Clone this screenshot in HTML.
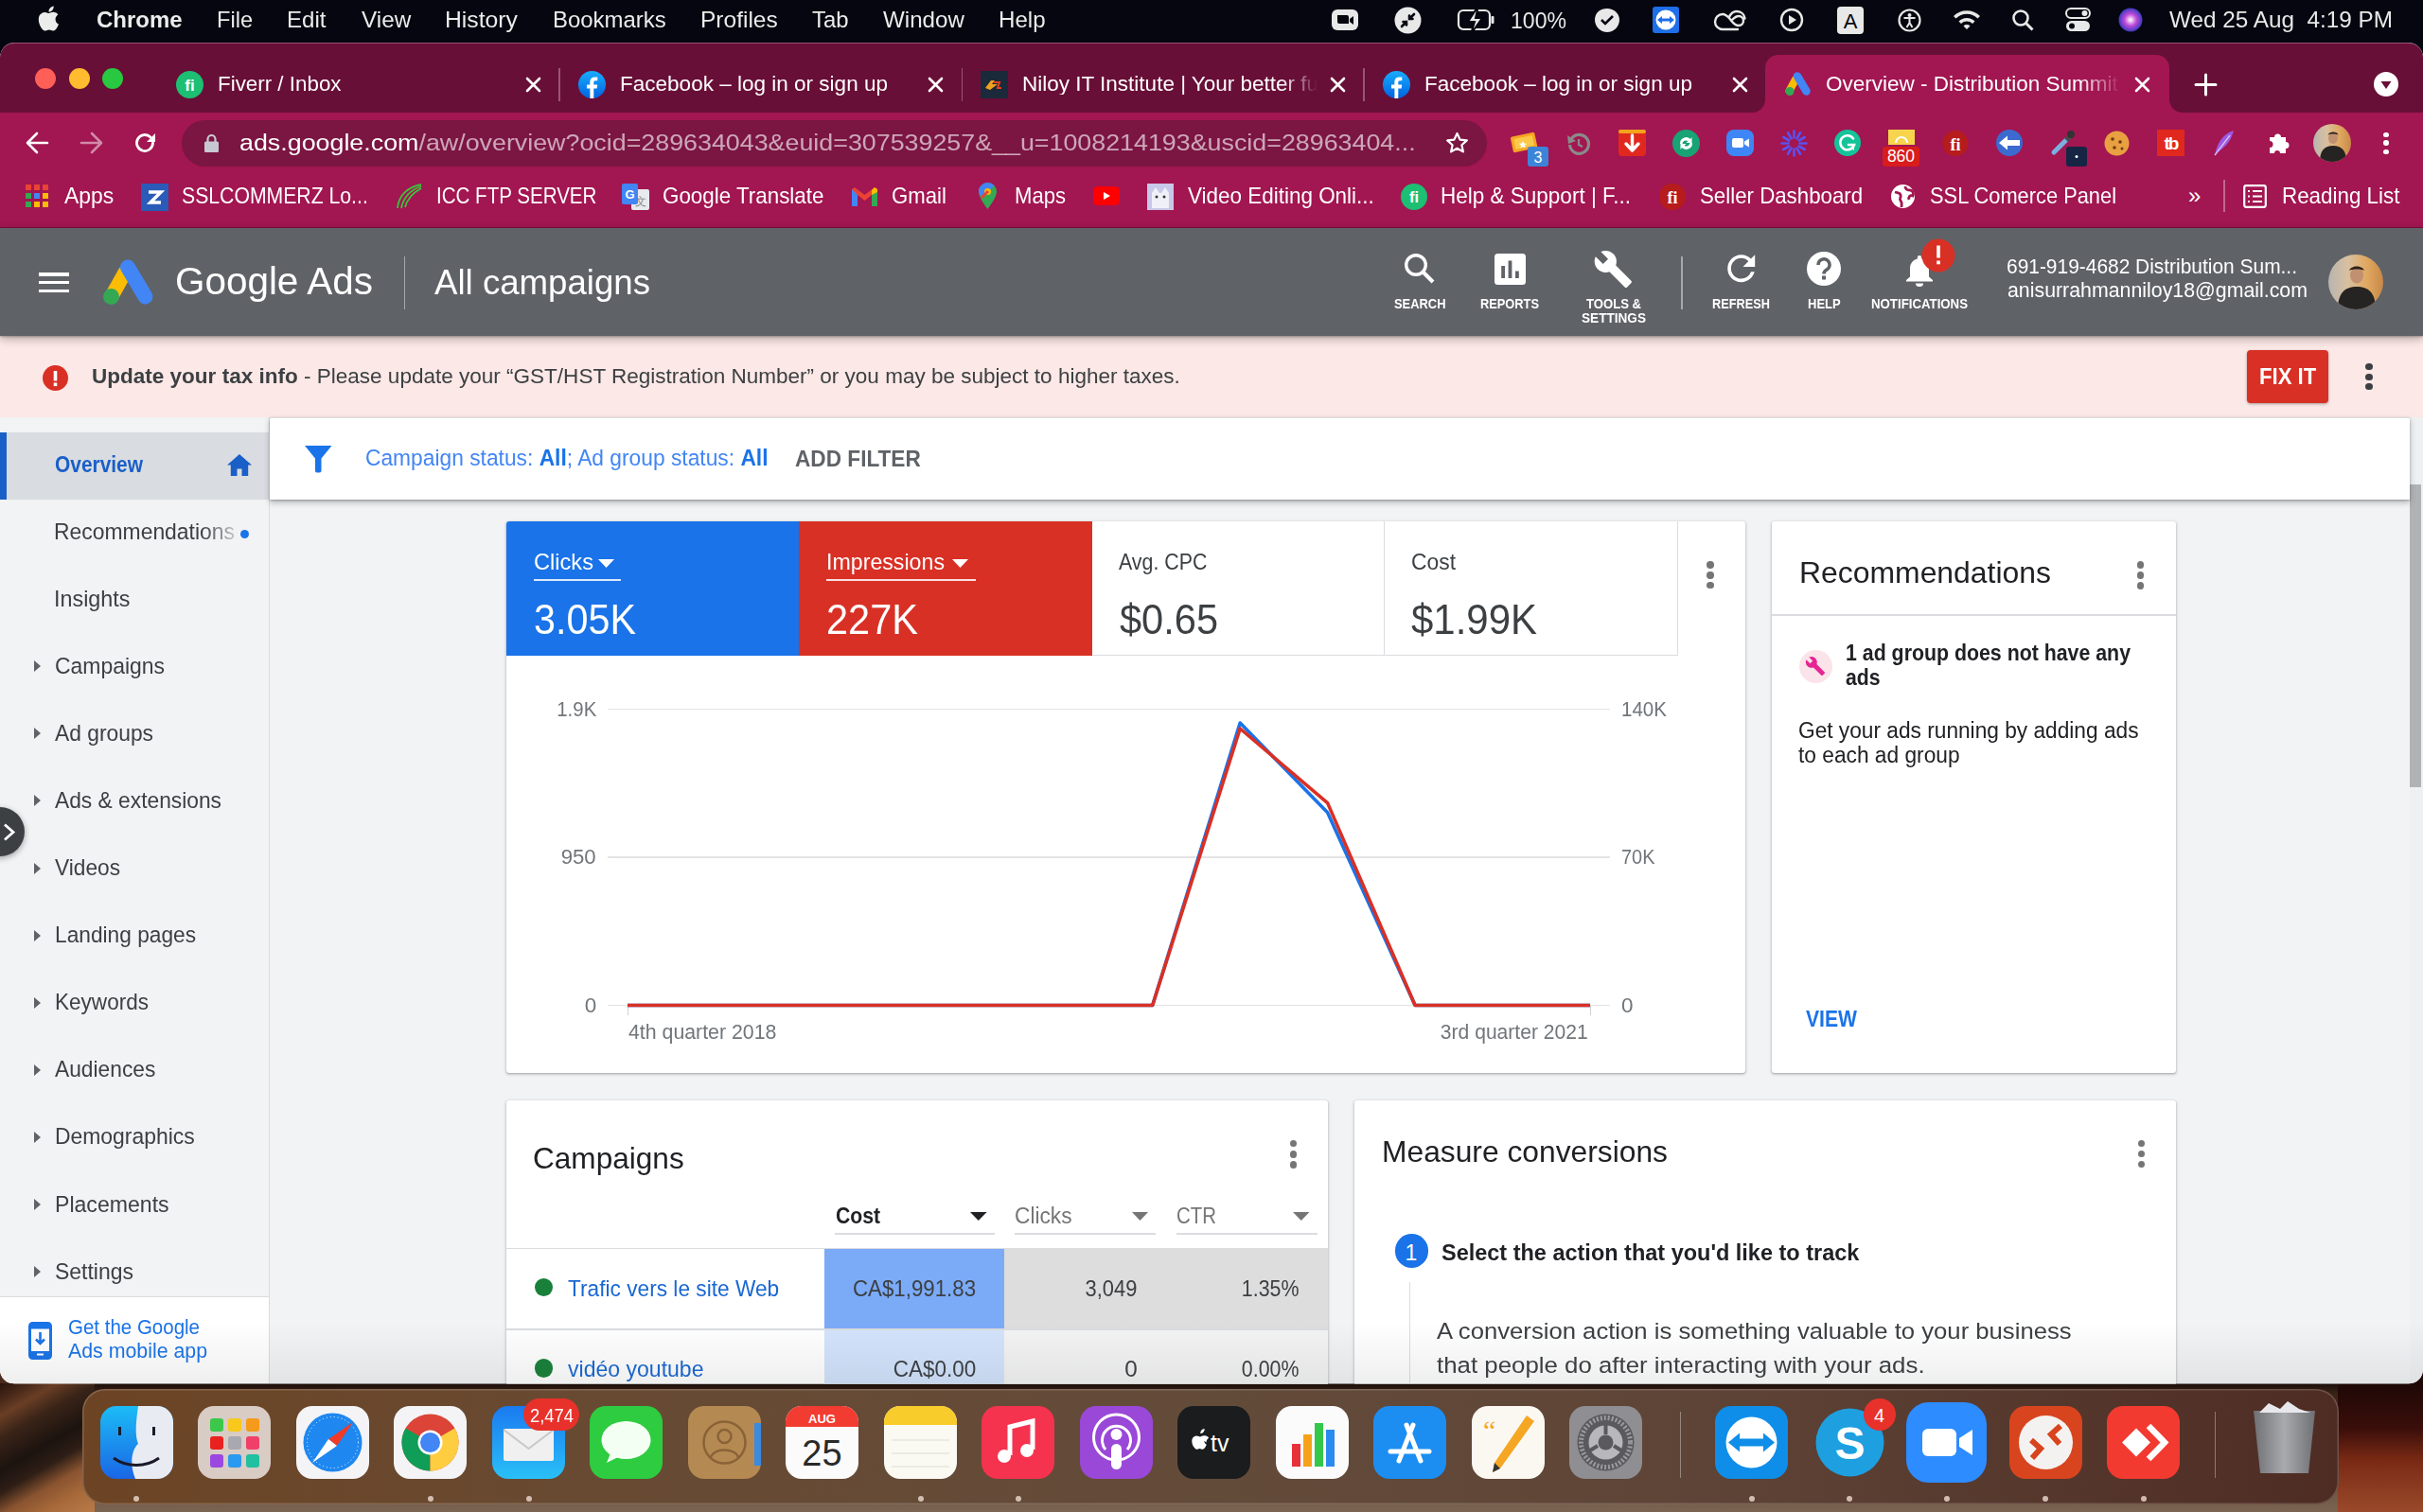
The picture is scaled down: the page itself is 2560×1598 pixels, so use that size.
<!DOCTYPE html><html><head><meta charset="utf-8"><title>Google Ads</title><style>*{margin:0;padding:0;box-sizing:content-box}
html,body{width:2560px;height:1598px;overflow:hidden;background:#3a2418;font-family:"Liberation Sans",sans-serif}
.a{position:absolute}
.t{position:absolute;line-height:1;white-space:nowrap}
svg.a{overflow:visible}
</style></head><body>
<div class="a" style="left:0;top:0;width:2560px;height:1598px;background:linear-gradient(180deg,#05060f 0,#05060f 120px,rgba(0,0,0,0) 121px),linear-gradient(90deg,#4a2a1c 0%,#7a4a2a 8%,#5e3a26 20%,#6a4630 45%,#5a3a2a 70%,#3a1a14 88%,#1e0806 100%);"></div>
<div class="a" style="left:0;top:1462px;width:2560px;height:136px;background:linear-gradient(180deg,#1a0c08 0%,#3a2418 8%,#5a3a28 50%,#7a6452 100%);"></div>
<div class="a" style="left:2470px;top:1462px;width:90px;height:136px;background:linear-gradient(180deg,#1e0806 0%,#3a0e0a 35%,#7a2a14 60%,#9a4a2a 100%);"></div>
<div class="a" style="left:0;top:1462px;width:100px;height:136px;background:linear-gradient(150deg,#2a140c 0%,#4a2a1a 10%,#6a3e24 18%,#3a2418 30%,#1c130f 48%,#2e1e16 60%,#8a5430 72%,#a86a3a 85%,#b87a48 100%);"></div>
<div class="a" style="left:0px;top:0px;width:2560px;height:46px;background:#05060f;"></div>
<svg class="a" style="left:39px;top:5px;" width="24" height="29" viewBox="0 0 24 29"><path fill="#ececec" d="M19.6 15.4c0-3.3 2.7-4.9 2.8-5-1.5-2.2-3.9-2.5-4.8-2.6-2-.2-4 1.2-5 1.2s-2.6-1.2-4.3-1.1C6 7.9 4 9.2 2.9 11.1.6 15.1 2.3 21 4.5 24.2c1.100 1.600 2.400 3.300 4.100 3.300 1.600-.1 2.300-1.100 4.300-1.100s2.600 1.100 4.300 1c1.800 0 2.900-1.600 4-3.200 1.200-1.800 1.700-3.600 1.800-3.700-.1 0-3.400-1.300-3.400-5.100zM16.400 5.700c.9-1.100 1.500-2.600 1.300-4.100-1.300.1-2.900.9-3.800 2-.8.9-1.600 2.500-1.400 4 1.500.1 3-.8 3.900-1.900z"/></svg>
<div class="t" style="top:9.3px;font-size:24.5px;color:#ececec;font-weight:700;left:101.7px;transform:scaleX(0.9776);transform-origin:0 0;">Chrome</div>
<div class="t" style="top:9.3px;font-size:24.5px;color:#ececec;left:228.5px;transform:scaleX(0.9626);transform-origin:0 0;">File</div>
<div class="t" style="top:9.3px;font-size:24.5px;color:#ececec;left:303px;transform:scaleX(0.9830);transform-origin:0 0;">Edit</div>
<div class="t" style="top:9.3px;font-size:24.5px;color:#ececec;left:381.7px;transform:scaleX(0.9912);transform-origin:0 0;">View</div>
<div class="t" style="top:9.3px;font-size:24.5px;color:#ececec;left:470px;transform:scaleX(1.0088);transform-origin:0 0;">History</div>
<div class="t" style="top:9.3px;font-size:24.5px;color:#ececec;left:583.7px;transform:scaleX(0.9777);transform-origin:0 0;">Bookmarks</div>
<div class="t" style="top:9.3px;font-size:24.5px;color:#ececec;left:739.8px;transform:scaleX(1.0001);transform-origin:0 0;">Profiles</div>
<div class="t" style="top:9.3px;font-size:24.5px;color:#ececec;left:858px;transform:scaleX(0.9746);transform-origin:0 0;">Tab</div>
<div class="t" style="top:9.3px;font-size:24.5px;color:#ececec;left:932.6px;transform:scaleX(0.9858);transform-origin:0 0;">Window</div>
<div class="t" style="top:9.3px;font-size:24.5px;color:#ececec;left:1054.7px;transform:scaleX(0.9844);transform-origin:0 0;">Help</div>
<svg class="a" style="left:1407px;top:8px;" width="28" height="26" viewBox="0 0 28 26"><rect x="0" y="2" width="28" height="22" rx="6" fill="#e8e8e8"/><path d="M6 8h10a2 2 0 0 1 2 2v7H8a2 2 0 0 1-2-2z" fill="#05060f"/><path d="M19 12l4-3v9l-4-3z" fill="#05060f"/></svg>
<svg class="a" style="left:1473px;top:7px;" width="29" height="29" viewBox="0 0 29 29"><circle cx="14.5" cy="14.5" r="14" fill="#e8e8e8"/><path d="M8 21l5-5M9.500 16H13v3.500M21 8l-5 5M19.500 13H16V9.500" stroke="#05060f" stroke-width="2.600" fill="none" stroke-linecap="round"/></svg>
<svg class="a" style="left:1540px;top:5px;" width="40" height="32" viewBox="0 0 40 32"><rect x="1" y="6" width="33" height="20" rx="5" fill="none" stroke="#e8e8e8" stroke-width="2.200"/><rect x="35.500" y="12" width="3" height="8" rx="1" fill="#e8e8e8"/><path d="M22 1L11 18h7l-4 13 12-17h-7z" fill="#e8e8e8" stroke="#05060f" stroke-width="2"/></svg>
<div class="t" style="top:9.7px;font-size:24px;color:#e8e8e8;left:1596px;transform:scaleX(0.9612);transform-origin:0 0;">100%</div>
<svg class="a" style="left:1684px;top:8px;" width="28" height="27" viewBox="0 0 28 27"><path d="M14 1c7 0 13 5 13 12 0 7-6 13-13 13S1 20 1 13C1 5 7 1 14 1z" fill="#e8e8e8"/><path d="M8 13l4 4 8-8" stroke="#05060f" stroke-width="2.6" fill="none"/></svg>
<svg class="a" style="left:1746px;top:7px;" width="28" height="28" viewBox="0 0 28 28"><rect width="28" height="28" rx="3" fill="#1e6ee8"/><circle cx="14" cy="14" r="10.5" fill="#fff"/><path d="M5 14l5-4v2.5h8V10l5 4-5 4v-2.5h-8V18z" fill="#1e6ee8"/></svg>
<svg class="a" style="left:1810px;top:8px;" width="35" height="26" viewBox="0 0 35 26"><path d="M10 23a8 8 0 0 1 0-16c4 0 6 3 8.500 6s4.500 6 8.500 6a5 5 0 0 0 0-10c-3 0-5 2-7 4M17 10c1.500-3.500 4-6 8-6 5 0 8 3.500 8.500 7.500M10 23h16" stroke="#e8e8e8" stroke-width="2.400" fill="none" stroke-linecap="round"/></svg>
<svg class="a" style="left:1880px;top:8px;" width="26" height="26" viewBox="0 0 26 26"><circle cx="13" cy="13" r="11" fill="none" stroke="#e8e8e8" stroke-width="2.4"/><path d="M10 8l8 5-8 5z" fill="#e8e8e8"/></svg>
<svg class="a" style="left:1941px;top:7px;" width="28" height="29" viewBox="0 0 28 29"><rect x="0" y="0" width="28" height="29" rx="4" fill="#e8e8e8"/><text x="14" y="23" text-anchor="middle" font-family="Liberation Sans" font-size="22" fill="#05060f">A</text></svg>
<svg class="a" style="left:2005px;top:9px;" width="25" height="25" viewBox="0 0 25 25"><circle cx="12.5" cy="12.5" r="11" fill="none" stroke="#e8e8e8" stroke-width="2.2"/><circle cx="12.5" cy="7" r="2" fill="#e8e8e8"/><path d="M6.5 10h12M12.5 10v5l-3 5M12.5 15l3 5" stroke="#e8e8e8" stroke-width="2" fill="none"/></svg>
<svg class="a" style="left:2062px;top:8px;" width="32" height="24" viewBox="0 0 32 24"><path d="M2 9a20 20 0 0 1 28 0l-2.5 2.5a16.5 16.5 0 0 0-23 0z" fill="#e8e8e8"/><path d="M7.5 14.5a12 12 0 0 1 17 0L22 17a8.5 8.5 0 0 0-12 0z" fill="#e8e8e8"/><path d="M12.5 19.5a5 5 0 0 1 7 0L16 23z" fill="#e8e8e8"/></svg>
<svg class="a" style="left:2125px;top:9px;" width="25" height="25" viewBox="0 0 25 25"><circle cx="10" cy="10" r="7.5" fill="none" stroke="#e8e8e8" stroke-width="2.6"/><path d="M15.5 15.5l7 7" stroke="#e8e8e8" stroke-width="3"/></svg>
<svg class="a" style="left:2182px;top:8px;" width="27" height="26" viewBox="0 0 27 26"><rect x="1" y="1" width="25" height="10" rx="5" fill="none" stroke="#e8e8e8" stroke-width="2"/><circle cx="20.5" cy="6" r="3" fill="#e8e8e8"/><rect x="1" y="14" width="25" height="11" rx="5.5" fill="#e8e8e8"/><circle cx="7" cy="19.5" r="3" fill="#05060f"/></svg>
<svg class="a" style="left:2238px;top:8px;" width="26" height="26" viewBox="0 0 26 26"><defs><radialGradient id="sg" cx="50%" cy="50%" r="50%"><stop offset="0" stop-color="#fff"/><stop offset=".5" stop-color="#c04ad8"/><stop offset="1" stop-color="#3a3ac0"/></radialGradient></defs><circle cx="13" cy="13" r="12.5" fill="url(#sg)"/></svg>
<div class="t" style="top:9.3px;font-size:24.5px;color:#e8e8e8;left:2291.6px;transform:scaleX(0.9920);transform-origin:0 0;">Wed 25 Aug&nbsp;&nbsp;4:19 PM</div>
<div class="a" style="left:0;top:0;width:2560px;height:1598px;clip-path:inset(45px 0 135.5px 0 round 15px);">
<div class="a" style="left:0;top:45px;width:2560px;height:1418px;border-radius:15px;background:#f1f3f4;overflow:hidden;"></div>
<div class="a" style="left:0;top:45px;width:2560px;height:74px;border-radius:15px 15px 0 0;background:#680f37;box-shadow:inset 0 1px 0 rgba(255,255,255,.28);"></div>
<div class="a" style="left:37px;top:71.5px;width:22px;height:22px;border-radius:50%;background:#fe5f57;"></div>
<div class="a" style="left:72.5px;top:71.5px;width:22px;height:22px;border-radius:50%;background:#febc2e;"></div>
<div class="a" style="left:108px;top:71.5px;width:22px;height:22px;border-radius:50%;background:#28c840;"></div>
<svg class="a" style="left:186px;top:74.5px;" width="29" height="29" viewBox="0 0 29 29"><circle cx="14.5" cy="14.5" r="14.5" fill="#1dbf73"/><text x="14.5" y="21" text-anchor="middle" font-family="Liberation Sans" font-weight="700" font-size="17" fill="#fff">fi</text></svg>
<div class="t" style="top:77.5px;font-size:22.5px;color:#fff;left:229.7px;transform:scaleX(0.9940);transform-origin:0 0;">Fiverr / Inbox</div>
<svg class="a" style="left:556.0px;top:81.5px;" width="15" height="15" viewBox="0 0 15 15"><path d="M1 1L14 14M14 1L1 14" stroke="#fff" stroke-width="2.6" stroke-linecap="round"/></svg>
<div class="a" style="left:590px;top:72px;width:1.5px;height:35px;background:rgba(255,255,255,.3);"></div>
<svg class="a" style="left:611px;top:74.5px;" width="29" height="29" viewBox="0 0 29 29"><defs><linearGradient id="fbg" x1="0" y1="0" x2="0" y2="1"><stop offset="0" stop-color="#18acfe"/><stop offset="1" stop-color="#0163e0"/></linearGradient></defs><circle cx="14.5" cy="14.5" r="14.5" fill="url(#fbg)"/><path d="M16.3 29V18.6h3.4l.5-4h-3.9v-2.5c0-1.1.3-1.900 1.900-1.900h2.100V6.600c-.4 0-1.600-.2-3-.2-3 0-5 1.800-5 5.200v3H9v4h3.400V29z" fill="#fff"/></svg>
<div class="t" style="top:77.5px;font-size:22.5px;color:#fff;left:654.7px;transform:scaleX(1.0011);transform-origin:0 0;">Facebook – log in or sign up</div>
<svg class="a" style="left:980.5px;top:81.5px;" width="15" height="15" viewBox="0 0 15 15"><path d="M1 1L14 14M14 1L1 14" stroke="#fff" stroke-width="2.6" stroke-linecap="round"/></svg>
<div class="a" style="left:1015.5px;top:72px;width:1.5px;height:35px;background:rgba(255,255,255,.3);"></div>
<svg class="a" style="left:1036px;top:75px;" width="29" height="29" viewBox="0 0 29 29"><rect width="29" height="29" fill="#1a2a3a"/><path d="M5 18l6-8h4l-3 4h6l-8 6z" fill="#f0a020"/><path d="M14 12h6l-2 6h4" stroke="#e04020" stroke-width="2" fill="none"/></svg>
<div class="t" style="left:1080px;top:77.5px;font-size:22.5px;color:#fff;width:312px;overflow:hidden;-webkit-mask-image:linear-gradient(90deg,#000 88%,transparent 100%);">Niloy IT Institute | Your better future</div>
<svg class="a" style="left:1405.5px;top:81.5px;" width="15" height="15" viewBox="0 0 15 15"><path d="M1 1L14 14M14 1L1 14" stroke="#fff" stroke-width="2.6" stroke-linecap="round"/></svg>
<div class="a" style="left:1440px;top:72px;width:1.5px;height:35px;background:rgba(255,255,255,.3);"></div>
<svg class="a" style="left:1461px;top:74.5px;" width="29" height="29" viewBox="0 0 29 29"><defs><linearGradient id="fbg" x1="0" y1="0" x2="0" y2="1"><stop offset="0" stop-color="#18acfe"/><stop offset="1" stop-color="#0163e0"/></linearGradient></defs><circle cx="14.5" cy="14.5" r="14.5" fill="url(#fbg)"/><path d="M16.3 29V18.6h3.4l.5-4h-3.9v-2.5c0-1.1.3-1.900 1.900-1.900h2.100V6.600c-.4 0-1.600-.2-3-.2-3 0-5 1.800-5 5.200v3H9v4h3.400V29z" fill="#fff"/></svg>
<div class="t" style="top:77.5px;font-size:22.5px;color:#fff;left:1505px;transform:scaleX(1.0011);transform-origin:0 0;">Facebook – log in or sign up</div>
<svg class="a" style="left:1830.5px;top:81.5px;" width="15" height="15" viewBox="0 0 15 15"><path d="M1 1L14 14M14 1L1 14" stroke="#fff" stroke-width="2.6" stroke-linecap="round"/></svg>
<div class="a" style="left:1865px;top:58px;width:427px;height:62px;background:#a21651;border-radius:14px 14px 0 0;"></div>
<svg class="a" style="left:1851px;top:105px" width="14" height="14"><path d="M0 14 A14 14 0 0 0 14 0 V14z" fill="#a21651"/></svg>
<svg class="a" style="left:2292px;top:105px" width="14" height="14"><path d="M14 14 A14 14 0 0 1 0 0 V14z" fill="#a21651"/></svg>
<svg class="a" style="left:1886px;top:76px;" width="28" height="26" viewBox="0 0 28 26"><path d="M4.5 20 L11 8" stroke="#fbbc04" stroke-width="8" stroke-linecap="round"/><path d="M13 4.5 L22.5 20.5" stroke="#4285f4" stroke-width="8.5" stroke-linecap="round"/><circle cx="5" cy="20.5" r="4.5" fill="#34a853"/></svg>
<div class="t" style="left:1929px;top:77.5px;font-size:22.5px;color:#fff;width:312px;overflow:hidden;-webkit-mask-image:linear-gradient(90deg,#000 86%,transparent 100%);">Overview - Distribution Summit</div>
<svg class="a" style="left:2255.5px;top:81.5px;" width="15" height="15" viewBox="0 0 15 15"><path d="M1 1L14 14M14 1L1 14" stroke="#fff" stroke-width="2.6" stroke-linecap="round"/></svg>
<svg class="a" style="left:2319px;top:78px;" width="23" height="23" viewBox="0 0 23 23"><path d="M11.5 1v21M1 11.5h21" stroke="#fff" stroke-width="3" stroke-linecap="round"/></svg>
<svg class="a" style="left:2507.5px;top:76px;" width="26" height="26" viewBox="0 0 26 26"><circle cx="13" cy="13" r="13" fill="#fff"/><path d="M7.5 10h11l-5.5 8z" fill="#680f37"/></svg>
<div class="a" style="left:0px;top:119px;width:2560px;height:122px;background:#a21651;"></div>
<svg class="a" style="left:27px;top:139px;" width="25" height="24" viewBox="0 0 25 24"><path d="M23 12H3M12 2L2 12l10 10" stroke="#fff" stroke-width="2.6" fill="none" stroke-linecap="round" stroke-linejoin="round"/></svg>
<svg class="a" style="left:84px;top:139px;" width="25" height="24" viewBox="0 0 25 24"><path d="M2 12h20M13 2l10 10-10 10" stroke="rgba(255,255,255,.5)" stroke-width="2.6" fill="none" stroke-linecap="round" stroke-linejoin="round"/></svg>
<svg class="a" style="left:140px;top:138px;" width="26" height="26" viewBox="0 0 26 26"><path d="M21.5 13a8.5 8.5 0 1 1-2.5-6" stroke="#fff" stroke-width="2.8" fill="none" stroke-linecap="round"/><path d="M24 3v9h-9z" fill="#fff"/></svg>
<div class="a" style="left:192px;top:126.5px;width:1379px;height:49px;border-radius:25px;background:#7b1542;"></div>
<svg class="a" style="left:216px;top:141px;" width="15" height="20" viewBox="0 0 15 20"><path d="M3.5 9V6a4 4 0 0 1 8 0v3" stroke="#c8c8d0" stroke-width="2.2" fill="none"/><rect x="0" y="8.5" width="15" height="11.5" rx="1.5" fill="#c8c8d0"/></svg>
<div class="t" style="top:138.9px;font-size:24.6px;color:#fff;left:253px;transform:scaleX(1.0909);transform-origin:0 0;">ads.google.com<span style="color:rgba(255,255,255,.62)">/aw/overview?ocid=289634043&amp;euid=307539257&amp;__u=1008214193&amp;uscid=28963404...</span></div>
<svg class="a" style="left:1527px;top:139px;" width="25" height="25" viewBox="0 0 25 25"><path d="M12.5 2l3.1 6.6 7.2.8-5.4 4.9 1.5 7.100-6.400-3.600-6.400 3.600 1.500-7.100L2.200 9.400l7.200-.8z" stroke="#fff" stroke-width="2.2" fill="none" stroke-linejoin="round"/></svg>
<svg class="a" style="left:1596px;top:139px;" width="40" height="37" viewBox="0 0 40 37"><g transform="rotate(-12 14 11)"><rect x="1" y="3" width="26" height="17" rx="2" fill="#f6a623"/><rect x="4" y="6" width="20" height="11" rx="1" fill="#fbc94a"/></g><path d="M13 10l1.2 2.5 2.8.3-2 1.900.5 2.700-2.500-1.300-2.500 1.300.5-2.700-2-1.900 2.800-.3z" fill="#fff"/><rect x="18" y="16" width="22" height="21" rx="3" fill="#3d84d8"/><text x="29" y="32.5" text-anchor="middle" font-family="Liberation Sans" font-size="16" fill="#fff">3</text></svg>
<svg class="a" style="left:1655px;top:139px;" width="26" height="26" viewBox="0 0 26 26"><path d="M5 8a10 10 0 1 1-1.5 6" stroke="#8a8a8a" stroke-width="3.2" fill="none"/><path d="M1 4l1 9 8-3z" fill="#8a8a8a"/><path d="M13 8v6l4 2" stroke="#8a8a8a" stroke-width="2.2" fill="none"/></svg>
<svg class="a" style="left:1710px;top:137px;" width="29" height="28" viewBox="0 0 29 28"><rect width="29" height="28" rx="4" fill="#e0281e"/><rect width="29" height="4" rx="2" fill="#f4a21a"/><path d="M14.5 6v15M8 15l6.5 7 6.5-7" stroke="#fff" stroke-width="3.4" fill="none" stroke-linecap="round" stroke-linejoin="round"/></svg>
<svg class="a" style="left:1767px;top:137px;" width="29" height="29" viewBox="0 0 29 29"><circle cx="14.5" cy="14.5" r="14.5" fill="#18a374"/><path d="M8 15a6.5 6.5 0 0 1 11-5l1.5-2v6h-6l2-2a4 4 0 0 0-6 3zM21 14a6.5 6.5 0 0 1-11 5l-1.5 2v-6h6l-2 2a4 4 0 0 0 6-3z" fill="#fff"/></svg>
<svg class="a" style="left:1824px;top:137px;" width="29" height="28" viewBox="0 0 29 28"><rect width="29" height="28" rx="8" fill="#3e86f6"/><rect x="6" y="9" width="12" height="10" rx="2" fill="#fff"/><path d="M19 12.5l5-3v9l-5-3z" fill="#fff"/></svg>
<svg class="a" style="left:1881px;top:137px;" width="29" height="29" viewBox="0 0 29 29"><g stroke="#5a52f0" stroke-width="2.6" stroke-linecap="round"><path d="M14.5 14.5m6.00 0.00l7.00 0.00"/><path d="M14.5 14.5m5.20 3.00l6.06 3.50"/><path d="M14.5 14.5m3.00 5.20l3.50 6.06"/><path d="M14.5 14.5m-0.00 6.00l-0.00 7.00"/><path d="M14.5 14.5m-3.00 5.20l-3.50 6.06"/><path d="M14.5 14.5m-5.20 3.00l-6.06 3.50"/><path d="M14.5 14.5m-6.00 -0.00l-7.00 -0.00"/><path d="M14.5 14.5m-5.20 -3.00l-6.06 -3.50"/><path d="M14.5 14.5m-3.00 -5.20l-3.50 -6.06"/><path d="M14.5 14.5m0.00 -6.00l0.00 -7.00"/><path d="M14.5 14.5m3.00 -5.20l3.50 -6.06"/><path d="M14.5 14.5m5.20 -3.00l6.06 -3.50"/></g></svg>
<svg class="a" style="left:1938px;top:137px;" width="28" height="28" viewBox="0 0 28 28"><circle cx="14" cy="14" r="14" fill="#15c39a"/><path d="M20 9.5a7.5 7.5 0 1 0 1 6.5h-6" stroke="#fff" stroke-width="2.6" fill="none" stroke-linecap="round"/><path d="M17 19l4 3v-5z" fill="#fff"/></svg>
<svg class="a" style="left:1989px;top:137px;" width="39" height="39" viewBox="0 0 39 39"><rect x="6" y="0" width="28" height="16" fill="#f8d44c"/><path d="M14 14a6 6 0 0 1 12 0" stroke="#fff" stroke-width="2" fill="none"/><rect x="0" y="18" width="39" height="21" rx="3" fill="#d91c1c"/><text x="19.5" y="34" text-anchor="middle" font-family="Liberation Sans" font-size="17.5" fill="#fff">860</text></svg>
<svg class="a" style="left:2052px;top:138px;" width="28" height="27" viewBox="0 0 28 27"><circle cx="14" cy="13.5" r="13.5" fill="#b71c1c"/><text x="14" y="20.5" text-anchor="middle" font-family="Liberation Serif" font-weight="700" font-size="18" fill="#fff">fi</text></svg>
<svg class="a" style="left:2109px;top:137px;" width="28" height="28" viewBox="0 0 28 28"><circle cx="14" cy="14" r="14" fill="#3b6ad0"/><path d="M3 14l9-7.5V11h13v6H12v4.5z" fill="#fff"/></svg>
<svg class="a" style="left:2166px;top:137px;" width="39" height="39" viewBox="0 0 39 39"><path d="M4 24l13-13" stroke="#7ab0e0" stroke-width="5" stroke-linecap="round"/><path d="M15 9l5-5 4 4-5 5z" fill="#4a4a4a"/><circle cx="22" cy="5" r="4" fill="#333"/><rect x="17" y="18" width="22" height="21" rx="3" fill="#162544"/><circle cx="28" cy="28.5" r="1.5" fill="#fff"/></svg>
<svg class="a" style="left:2223px;top:138px;" width="27" height="27" viewBox="0 0 27 27"><circle cx="13.5" cy="13.5" r="13" fill="#e8a040"/><circle cx="9" cy="9" r="1.8" fill="#6a3a10"/><circle cx="17" cy="12" r="1.8" fill="#6a3a10"/><circle cx="11" cy="18" r="1.8" fill="#6a3a10"/><circle cx="19" cy="19" r="1.5" fill="#6a3a10"/></svg>
<svg class="a" style="left:2279px;top:137px;" width="29" height="28" viewBox="0 0 29 28"><rect width="29" height="28" fill="#e0281e"/><text x="14.5" y="21" text-anchor="middle" font-family="Liberation Sans" font-weight="700" font-size="19" fill="#fff" letter-spacing="-2">tb</text></svg>
<svg class="a" style="left:2338px;top:137px;" width="24" height="29" viewBox="0 0 24 29"><path d="M22 1C12 4 5 12 2 27c6-6 14-10 18-20z" fill="#9a5ae0"/><path d="M2 27L18 6" stroke="#d8b8f8" stroke-width="1.5"/></svg>
<svg class="a" style="left:2395px;top:138px;" width="26" height="26" viewBox="0 0 26 26"><path d="M3 7h5a3.5 3.5 0 1 1 7 0h5v5a3.5 3.5 0 1 1 0 7v5h-6a3 3 0 1 0-6 0H3v-6a3.5 3.5 0 1 0 0-7z" fill="#fff"/></svg>
<svg class="a" style="left:2444px;top:131px;" width="40" height="40" viewBox="0 0 40 40"><defs><clipPath id="avc2"><circle cx="20" cy="20" r="20"/></clipPath><linearGradient id="avg2" x1="0" y1="0" x2="1" y2="0"><stop offset="0" stop-color="#b8b4b0"/><stop offset=".35" stop-color="#d8c0a0"/><stop offset=".7" stop-color="#e0a860"/><stop offset="1" stop-color="#c88848"/></linearGradient></defs><g clip-path="url(#avc2)"><rect width="40" height="40" fill="url(#avg2)"/><ellipse cx="21" cy="15" rx="5" ry="6" fill="#c09070"/><path d="M15.500 11.500c1.500-4 10-4 11 0-2-1.500-9-1.500-11 0z" fill="#2a2018"/><path d="M7 40c0-12 5-17 14-17s14 5 14 17z" fill="#262422"/></g></svg>
<div class="a" style="left:2518.0px;top:139.6px;width:5.6px;height:5.6px;border-radius:50%;background:#fff;"></div>
<div class="a" style="left:2518.0px;top:148.29999999999998px;width:5.6px;height:5.6px;border-radius:50%;background:#fff;"></div>
<div class="a" style="left:2518.0px;top:157.5px;width:5.6px;height:5.6px;border-radius:50%;background:#fff;"></div>
<div class="a" style="left:0px;top:239.5px;width:2560px;height:1.5px;background:rgba(60,0,20,.35);"></div>
<svg class="a" style="left:27px;top:195px;" width="24" height="24" viewBox="0 0 24 24"><rect x="0" y="0" width="6" height="6" fill="#ea4335"/><rect x="9" y="0" width="6" height="6" fill="#ea4335"/><rect x="18" y="0" width="6" height="6" fill="#ea4335"/><rect x="0" y="9" width="6" height="6" fill="#34a853"/><rect x="9" y="9" width="6" height="6" fill="#4285f4"/><rect x="18" y="9" width="6" height="6" fill="#fbbc04"/><rect x="0" y="18" width="6" height="6" fill="#34a853"/><rect x="9" y="18" width="6" height="6" fill="#fbbc04"/><rect x="18" y="18" width="6" height="6" fill="#fbbc04"/></svg>
<div class="t" style="top:195.9px;font-size:23.2px;color:#fff;left:67.6px;transform:scaleX(0.9871);transform-origin:0 0;">Apps</div>
<svg class="a" style="left:149px;top:194px;" width="29" height="29" viewBox="0 0 29 29"><rect width="29" height="29" fill="#2a5bb8"/><path d="M8 9h13l-11 11h11" stroke="#fff" stroke-width="3.5" fill="none"/></svg>
<div class="t" style="top:195.9px;font-size:23.2px;color:#fff;left:191.8px;transform:scaleX(0.9146);transform-origin:0 0;">SSLCOMMERZ Lo...</div>
<svg class="a" style="left:417px;top:192px;" width="30" height="30" viewBox="0 0 30 30"><path d="M3 28C4 16 12 6 28 3M7 28C9 18 16 9 28 5M11 27c2-8 8-15 17-20" stroke="#3cc43c" stroke-width="1.8" fill="none"/></svg>
<div class="t" style="top:195.9px;font-size:23.2px;color:#fff;left:461px;transform:scaleX(0.8864);transform-origin:0 0;">ICC FTP SERVER</div>
<svg class="a" style="left:657px;top:194px;" width="29" height="28" viewBox="0 0 29 28"><rect x="10" y="6" width="19" height="22" rx="2" fill="#e8eaed"/><text x="19.5" y="23" text-anchor="middle" font-size="12" fill="#888" font-family="Liberation Sans">文</text><rect x="0" y="0" width="17" height="22" rx="2" fill="#4285f4"/><text x="8.5" y="16" text-anchor="middle" font-size="13" font-weight="700" fill="#fff" font-family="Liberation Sans">G</text></svg>
<div class="t" style="top:195.9px;font-size:23.2px;color:#fff;left:700px;transform:scaleX(0.9650);transform-origin:0 0;">Google Translate</div>
<svg class="a" style="left:900px;top:197px;" width="27" height="21" viewBox="0 0 27 21"><path d="M0 3v18h6V9l7.5 6L21 9v12h6V3l-3-2-10.500 8L3 1z" fill="#ea4335"/><path d="M0 3v18h6V9z" fill="#4285f4"/><path d="M21 9v12h6V3z" fill="#34a853"/><path d="M24 1l3 2v3l-6 3V4z" fill="#fbbc04"/></svg>
<div class="t" style="top:195.9px;font-size:23.2px;color:#fff;left:942px;transform:scaleX(0.9557);transform-origin:0 0;">Gmail</div>
<svg class="a" style="left:1033px;top:192px;" width="21" height="30" viewBox="0 0 21 30"><path d="M10.5 1a9.5 9.5 0 0 1 9.5 9.5c0 6.500-9.500 18.500-9.500 18.500S1 17 1 10.500A9.500 9.500 0 0 1 10.500 1z" fill="#34a853"/><path d="M10.5 1a9.5 9.5 0 0 1 7 3l-13 13C2.500 14 1 12 1 10.500A9.500 9.500 0 0 1 10.500 1z" fill="#4285f4"/><circle cx="10.5" cy="10.5" r="3.5" fill="#fbbc04"/><path d="M4 17l7-7" stroke="#ea4335" stroke-width="3"/></svg>
<div class="t" style="top:195.9px;font-size:23.2px;color:#fff;left:1072.4px;transform:scaleX(0.9536);transform-origin:0 0;">Maps</div>
<svg class="a" style="left:1155px;top:197px;" width="28" height="20" viewBox="0 0 28 20"><rect width="28" height="20" rx="5" fill="#ff0000"/><path d="M11 6l7 4-7 4z" fill="#fff"/></svg>
<svg class="a" style="left:1212px;top:194px;" width="28" height="28" viewBox="0 0 28 28"><rect width="28" height="28" fill="#c8c8e8"/><path d="M5 26V10l4-6 4 6h2l4-6 4 6v16z" fill="#f0f0f8"/><circle cx="10" cy="14" r="1.5" fill="#333"/><circle cx="18" cy="14" r="1.5" fill="#333"/></svg>
<div class="t" style="top:195.9px;font-size:23.2px;color:#fff;left:1254.6px;transform:scaleX(0.9683);transform-origin:0 0;">Video Editing Onli...</div>
<svg class="a" style="left:1480px;top:193.5px;" width="28" height="28" viewBox="0 0 29 29"><circle cx="14.5" cy="14.5" r="14.5" fill="#1dbf73"/><text x="14.5" y="21" text-anchor="middle" font-family="Liberation Sans" font-weight="700" font-size="17" fill="#fff">fi</text></svg>
<div class="t" style="top:195.9px;font-size:23.2px;color:#fff;left:1522px;transform:scaleX(0.9706);transform-origin:0 0;">Help &amp; Support | F...</div>
<svg class="a" style="left:1753px;top:193.5px;" width="28" height="28" viewBox="0 0 28 28"><circle cx="14" cy="14" r="14" fill="#b71c1c"/><text x="14" y="21" text-anchor="middle" font-family="Liberation Serif" font-weight="700" font-size="18" fill="#fff">fi</text></svg>
<div class="t" style="top:195.9px;font-size:23.2px;color:#fff;left:1796px;transform:scaleX(0.9606);transform-origin:0 0;">Seller Dashboard</div>
<svg class="a" style="left:1998px;top:195px;" width="25" height="25" viewBox="0 0 25 25"><circle cx="12.5" cy="12.5" r="12.5" fill="#fff"/><path d="M4 8c3 1 5 0 6 3s-2 4 0 6 1 5 1 7M15 2c0 3 2 4 5 4s4 3 3 6c-3-1-5 1-4 4" stroke="#a21651" stroke-width="2.8" fill="none"/></svg>
<div class="t" style="top:195.9px;font-size:23.2px;color:#fff;left:2039px;transform:scaleX(0.9416);transform-origin:0 0;">SSL Comerce Panel</div>
<div class="t" style="top:195.2px;font-size:24px;color:#fff;left:2312px;">»</div>
<div class="a" style="left:2349px;top:190px;width:1.5px;height:34px;background:rgba(255,255,255,.35);"></div>
<svg class="a" style="left:2370px;top:195px;" width="25" height="25" viewBox="0 0 25 25"><rect x="1.2" y="1.2" width="22.600" height="22.600" rx="2" fill="none" stroke="#fff" stroke-width="2.2"/><path d="M5 7h2M10 7h10M5 12.5h2M10 12.5h10M5 18h2M10 18h10" stroke="#fff" stroke-width="2.2"/></svg>
<div class="t" style="top:195.9px;font-size:23.2px;color:#fff;left:2410.5px;transform:scaleX(0.9653);transform-origin:0 0;">Reading List</div>
<div class="a" style="left:0px;top:241px;width:2560px;height:114px;background:#5f6368;box-shadow:0 3px 9px rgba(0,0,0,.30),0 1px 2px rgba(0,0,0,.25);z-index:2;"></div>
<div class="a" style="left:41px;top:288.2px;width:32px;height:3.6px;background:#fff;z-index:3;"></div>
<div class="a" style="left:41px;top:296.7px;width:32px;height:3.6px;background:#fff;z-index:3;"></div>
<div class="a" style="left:41px;top:305.7px;width:32px;height:3.6px;background:#fff;z-index:3;"></div>
<svg class="a" style="left:109px;top:274px;z-index:3;" width="53" height="48" viewBox="0 0 53 48"><path d="M9 39 L23 14" stroke="#fbbc04" stroke-width="15" stroke-linecap="round"/><path d="M26 8.5 L44.5 39.5" stroke="#4285f4" stroke-width="16" stroke-linecap="round"/><circle cx="8.5" cy="39.5" r="8.5" fill="#34a853"/></svg>
<div class="t" style="top:277.3px;font-size:41px;color:#fff;left:185px;transform:scaleX(0.9859);transform-origin:0 0;z-index:3;">Google Ads</div>
<div class="a" style="left:426.5px;top:270.5px;width:1.5px;height:56px;background:rgba(255,255,255,.45);z-index:3;"></div>
<div class="t" style="top:280.0px;font-size:37px;color:#fff;left:459px;transform:scaleX(0.9899);transform-origin:0 0;z-index:3;">All campaigns</div>
<svg class="a" style="left:1484px;top:268px;z-index:3;" width="32" height="32" viewBox="0 0 32 32"><circle cx="12" cy="12" r="10.300" fill="none" stroke="#fff" stroke-width="3.400"/><path d="M19.500 19.500L30 30" stroke="#fff" stroke-width="4"/></svg>
<svg class="a" style="left:1578.5px;top:268px;z-index:3;" width="33" height="33" viewBox="0 0 33 33"><rect width="33" height="33" rx="3.5" fill="#fff"/><rect x="7.2" y="13" width="3.8" height="13" fill="#5f6368"/><rect x="14.6" y="7.5" width="3.8" height="18.5" fill="#5f6368"/><rect x="22" y="18.5" width="3.8" height="7.5" fill="#5f6368"/></svg>
<svg class="a" style="left:1683px;top:263px;z-index:3;" width="44" height="44" viewBox="0 0 44 44"><path transform="scale(1.78)" d="M22.700 19l-9.100-9.100c.9-2.300.4-5-1.500-6.900-2-2-5-2.400-7.400-1.300L9 6 6 9 1.600 4.700C.4 7.100.9 10.100 2.900 12.100c1.900 1.900 4.600 2.400 6.900 1.500l9.100 9.100c.4.4 1 .4 1.400 0l2.300-2.300c.5-.4.5-1.100.1-1.400z" fill="#fff"/></svg>
<div class="a" style="left:1776px;top:270.5px;width:1.5px;height:56px;background:rgba(255,255,255,.45);z-index:3;"></div>
<svg class="a" style="left:1817.5px;top:262.4px;z-index:3;" width="40" height="40" viewBox="0 0 40 40"><path transform="scale(1.81)" d="M17.650 6.350C16.200 4.900 14.210 4 12 4c-4.420 0-7.990 3.580-7.990 8s3.570 8 7.990 8c3.730 0 6.840-2.550 7.730-6h-2.080c-.82 2.330-3.040 4-5.650 4-3.310 0-6-2.690-6-6s2.690-6 6-6c1.660 0 3.140.69 4.220 1.780L13 11h7V4l-2.350 2.350z" fill="#fff"/></svg>
<svg class="a" style="left:1909px;top:266px;z-index:3;" width="36" height="36" viewBox="0 0 36 36"><circle cx="18" cy="18" r="18" fill="#fff"/><path d="M12 14a6 6 0 1 1 9 5c-2 1.200-3 2.200-3 4.500" stroke="#5f6368" stroke-width="3.600" fill="none"/><rect x="16" y="25.500" width="4" height="4" fill="#5f6368"/></svg>
<svg class="a" style="left:2013px;top:267px;z-index:3;" width="30" height="36" viewBox="0 0 30 36"><path d="M15 3a2.200 2.200 0 0 1 2.200 2.200v1.300A10 10 0 0 1 25 16.500v9l4 3.500v1.500H1V29l4-3.500v-9a10 10 0 0 1 7.800-10V5.200A2.200 2.200 0 0 1 15 3z" fill="#fff"/><path d="M11 32.500h8a4 3.500 0 0 1-8 0z" fill="#fff"/></svg>
<svg class="a" style="left:2030px;top:252px;z-index:3;" width="36" height="36" viewBox="0 0 36 36"><circle cx="18" cy="18" r="17.5" fill="#d93025"/><rect x="16.200" y="7.500" width="3.600" height="13" fill="#fff"/><rect x="16.200" y="23.500" width="3.600" height="3.800" fill="#fff"/></svg>
<div class="t" style="top:312.8px;font-size:15px;color:#fff;font-weight:700;left:1472.5px;transform:scaleX(0.8604);transform-origin:0 0;z-index:3;">SEARCH</div>
<div class="t" style="top:312.8px;font-size:15px;color:#fff;font-weight:700;left:1564px;transform:scaleX(0.8551);transform-origin:0 0;z-index:3;">REPORTS</div>
<div class="t" style="top:312.8px;font-size:15px;color:#fff;font-weight:700;left:1676px;transform:scaleX(0.8736);transform-origin:0 0;z-index:3;">TOOLS &amp;</div>
<div class="t" style="top:328.3px;font-size:15px;color:#fff;font-weight:700;left:1671px;transform:scaleX(0.9066);transform-origin:0 0;z-index:3;">SETTINGS</div>
<div class="t" style="top:312.8px;font-size:15px;color:#fff;font-weight:700;left:1808.5px;transform:scaleX(0.8497);transform-origin:0 0;z-index:3;">REFRESH</div>
<div class="t" style="top:312.8px;font-size:15px;color:#fff;font-weight:700;left:1909.6px;transform:scaleX(0.8674);transform-origin:0 0;z-index:3;">HELP</div>
<div class="t" style="top:312.8px;font-size:15px;color:#fff;font-weight:700;left:1977px;transform:scaleX(0.8828);transform-origin:0 0;z-index:3;">NOTIFICATIONS</div>
<div class="t" style="top:271.1px;font-size:22px;color:#fff;left:2120px;transform:scaleX(0.9509);transform-origin:0 0;z-index:3;">691-919-4682 Distribution Sum...</div>
<div class="t" style="top:296.0px;font-size:22px;color:#fff;left:2121px;transform:scaleX(0.9700);transform-origin:0 0;z-index:3;">anisurrahmanniloy18@gmail.com</div>
<svg class="a" style="left:2460px;top:269px;z-index:3;" width="58" height="58" viewBox="0 0 58 58"><defs><clipPath id="avc"><circle cx="29" cy="29" r="29"/></clipPath><linearGradient id="avg" x1="0" y1="0" x2="1" y2="0"><stop offset="0" stop-color="#b8b4b0"/><stop offset=".35" stop-color="#d8c0a0"/><stop offset=".7" stop-color="#e0a860"/><stop offset="1" stop-color="#c88848"/></linearGradient></defs><g clip-path="url(#avc)"><rect width="58" height="58" fill="url(#avg)"/><ellipse cx="30" cy="22" rx="7" ry="8.500" fill="#c09070"/><path d="M22 17c2-6 14-6 16 0-3-2-13-2-16 0z" fill="#2a2018"/><path d="M10 58c0-18 8-24 20-24s20 6 20 24z" fill="#262422"/></g></svg>
<div class="a" style="left:0px;top:355px;width:2560px;height:86px;background:#fce8e6;"></div>
<svg class="a" style="left:45px;top:386px;" width="27" height="27" viewBox="0 0 27 27"><circle cx="13.5" cy="13.5" r="13.5" fill="#d93025"/><rect x="11.700" y="6" width="3.600" height="10.500" fill="#fff"/><rect x="11.700" y="18.500" width="3.600" height="3.600" fill="#fff"/></svg>
<div class="t" style="top:386.2px;font-size:22.8px;color:#3c4043;left:96.5px;transform:scaleX(0.9879);transform-origin:0 0;"><b style="font-weight:700">Update your tax info</b> - Please update your “GST/HST Registration Number” or you may be subject to higher taxes.</div>
<div class="a" style="left:2373.5px;top:369.5px;width:86.5px;height:56.5px;background:#d93025;border-radius:4px;box-shadow:0 1px 3px rgba(0,0,0,.35);"></div>
<div class="t" style="top:386.3px;font-size:24.4px;color:#fff;font-weight:700;left:2386.5px;transform:scaleX(0.9063);transform-origin:0 0;">FIX IT</div>
<div class="a" style="left:2499.3px;top:383.8px;width:7.4px;height:7.4px;border-radius:50%;background:#3c4043;"></div>
<div class="a" style="left:2499.3px;top:394.5px;width:7.4px;height:7.4px;border-radius:50%;background:#3c4043;"></div>
<div class="a" style="left:2499.3px;top:405.0px;width:7.4px;height:7.4px;border-radius:50%;background:#3c4043;"></div>
<div class="a" style="left:0px;top:441px;width:285px;height:1021px;background:#f1f3f4;"></div>
<div class="a" style="left:284px;top:441px;width:1px;height:1021px;background:#dadce0;"></div>
<div class="a" style="left:0px;top:457px;width:285px;height:71px;background:#d9dce1;"></div>
<div class="a" style="left:0px;top:457px;width:7px;height:71px;background:#1a5fc8;"></div>
<div class="t" style="top:478.7px;font-size:24px;color:#1a5fc8;font-weight:700;left:57.8px;transform:scaleX(0.8713);transform-origin:0 0;">Overview</div>
<svg class="a" style="left:240px;top:480px;" width="26" height="23" viewBox="0 0 26 23"><path d="M13 0L0 11.500h3.800V23h6.700v-7.500h5V23h6.700V11.500H26z" fill="#1a5fc8"/></svg>
<div class="t" style="left:57px;top:549.8px;font-size:24.5px;color:#3c4043;-webkit-mask-image:linear-gradient(90deg,#000 82%,rgba(0,0,0,.25) 100%);transform:scaleX(.935);transform-origin:0 0;">Recommendations</div>
<div class="a" style="left:254px;top:560px;width:9px;height:9px;border-radius:50%;background:#1a73e8;"></div>
<div class="t" style="top:620.9px;font-size:24.5px;color:#3c4043;left:57px;transform:scaleX(0.9534);transform-origin:0 0;">Insights</div>
<div class="t" style="top:692.0px;font-size:24.5px;color:#3c4043;left:57.5px;transform:scaleX(0.9361);transform-origin:0 0;">Campaigns</div>
<svg class="a" style="left:35.5px;top:698.2px;" width="7" height="12" viewBox="0 0 7 12"><path d="M0 0L7 6L0 12z" fill="#5f6368"/></svg>
<div class="t" style="top:763.1px;font-size:24.5px;color:#3c4043;left:57.5px;transform:scaleX(0.9312);transform-origin:0 0;">Ad groups</div>
<svg class="a" style="left:35.5px;top:769.3px;" width="7" height="12" viewBox="0 0 7 12"><path d="M0 0L7 6L0 12z" fill="#5f6368"/></svg>
<div class="t" style="top:834.2px;font-size:24.5px;color:#3c4043;left:57.5px;transform:scaleX(0.9297);transform-origin:0 0;">Ads &amp; extensions</div>
<svg class="a" style="left:35.5px;top:840.4px;" width="7" height="12" viewBox="0 0 7 12"><path d="M0 0L7 6L0 12z" fill="#5f6368"/></svg>
<div class="t" style="top:905.3px;font-size:24.5px;color:#3c4043;left:57.5px;transform:scaleX(0.9266);transform-origin:0 0;">Videos</div>
<svg class="a" style="left:35.5px;top:911.5px;" width="7" height="12" viewBox="0 0 7 12"><path d="M0 0L7 6L0 12z" fill="#5f6368"/></svg>
<div class="t" style="top:976.3px;font-size:24.5px;color:#3c4043;left:57.5px;transform:scaleX(0.9269);transform-origin:0 0;">Landing pages</div>
<svg class="a" style="left:35.5px;top:982.5px;" width="7" height="12" viewBox="0 0 7 12"><path d="M0 0L7 6L0 12z" fill="#5f6368"/></svg>
<div class="t" style="top:1047.3px;font-size:24.5px;color:#3c4043;left:57.5px;transform:scaleX(0.9203);transform-origin:0 0;">Keywords</div>
<svg class="a" style="left:35.5px;top:1053.5px;" width="7" height="12" viewBox="0 0 7 12"><path d="M0 0L7 6L0 12z" fill="#5f6368"/></svg>
<div class="t" style="top:1118.3px;font-size:24.5px;color:#3c4043;left:57.5px;transform:scaleX(0.9291);transform-origin:0 0;">Audiences</div>
<svg class="a" style="left:35.5px;top:1124.5px;" width="7" height="12" viewBox="0 0 7 12"><path d="M0 0L7 6L0 12z" fill="#5f6368"/></svg>
<div class="t" style="top:1189.3px;font-size:24.5px;color:#3c4043;left:57.5px;transform:scaleX(0.9351);transform-origin:0 0;">Demographics</div>
<svg class="a" style="left:35.5px;top:1195.5px;" width="7" height="12" viewBox="0 0 7 12"><path d="M0 0L7 6L0 12z" fill="#5f6368"/></svg>
<div class="t" style="top:1260.8px;font-size:24.5px;color:#3c4043;left:57.5px;transform:scaleX(0.9422);transform-origin:0 0;">Placements</div>
<svg class="a" style="left:35.5px;top:1267.0px;" width="7" height="12" viewBox="0 0 7 12"><path d="M0 0L7 6L0 12z" fill="#5f6368"/></svg>
<div class="t" style="top:1332.1px;font-size:24.5px;color:#3c4043;left:57.5px;transform:scaleX(0.9376);transform-origin:0 0;">Settings</div>
<svg class="a" style="left:35.5px;top:1338.3px;" width="7" height="12" viewBox="0 0 7 12"><path d="M0 0L7 6L0 12z" fill="#5f6368"/></svg>
<div class="a" style="left:-26px;top:853px;width:52px;height:52px;border-radius:50%;background:#3c4043;box-shadow:0 2px 6px rgba(0,0,0,.35);z-index:5;"></div>
<svg class="a" style="left:3px;top:870px;z-index:6;" width="14" height="19" viewBox="0 0 14 19"><path d="M2 1.500L11 9.500 2 17.500" stroke="#fff" stroke-width="2.800" fill="none"/></svg>
<div class="a" style="left:0px;top:1370px;width:284px;height:92px;background:#fff;border-top:1.5px solid #dadce0;box-sizing:border-box;"></div>
<svg class="a" style="left:30px;top:1397px;" width="25" height="40" viewBox="0 0 25 40"><rect x="1.500" y="1.500" width="22" height="37" rx="3" fill="none" stroke="#1a73e8" stroke-width="3"/><rect x="1.500" y="1.500" width="22" height="6" fill="#1a73e8"/><rect x="1.500" y="31" width="22" height="7.500" fill="#1a73e8"/><rect x="9" y="33.500" width="7" height="2" fill="#fff"/><path d="M12.500 11v12M8 18.500l4.500 4.500 4.500-4.500" stroke="#1a73e8" stroke-width="2.600" fill="none"/></svg>
<div class="t" style="top:1392.8px;font-size:21.5px;color:#1a73e8;left:71.5px;transform:scaleX(0.9532);transform-origin:0 0;">Get the Google</div>
<div class="t" style="top:1417.6px;font-size:21.5px;color:#1a73e8;left:71.5px;transform:scaleX(0.9919);transform-origin:0 0;">Ads mobile app</div>
<div class="a" style="left:285px;top:441px;width:2261px;height:87px;background:#fff;box-shadow:0 3px 6px rgba(60,64,67,.35),0 1px 2px rgba(60,64,67,.3);z-index:1;border-top:1px solid #d6dbe0;box-sizing:border-box;"></div>
<div class="a" style="left:2546px;top:441px;width:14px;height:1021px;background:#eef0f2;"></div>
<div class="a" style="left:2546px;top:512px;width:12px;height:320px;background:#b1b2b4;"></div>
<svg class="a" style="left:321.5px;top:470.5px;z-index:2;" width="28.5" height="28.5" viewBox="0 0 28.5 28.5"><path d="M0 0H28.500L17.500 13.500V26.500a2 2 0 0 1-2 2h-2.500a2 2 0 0 1-2-2V13.500z" fill="#1a73e8"/></svg>
<div class="t" style="top:472.3px;font-size:24.5px;color:#4285f4;left:386.4px;transform:scaleX(0.9299);transform-origin:0 0;z-index:2;">Campaign status: <b style="color:#1a73e8">All</b>; Ad group status: <b style="color:#1a73e8">All</b></div>
<div class="t" style="top:473.3px;font-size:24.5px;color:#5f6368;font-weight:700;left:839.6px;transform:scaleX(0.9235);transform-origin:0 0;z-index:2;">ADD FILTER</div>
<div class="a" style="left:535px;top:551px;width:1309px;height:583px;background:#fff;box-shadow:0 1px 2px rgba(60,64,67,.3),0 1px 3px 1px rgba(60,64,67,.15);border-radius:3px;"></div>
<div class="a" style="left:535px;top:551px;width:309px;height:141.5px;background:#1a73e8;border-radius:3px 0 0 0;"></div>
<div class="a" style="left:844px;top:551px;width:310px;height:141.5px;background:#d93025;"></div>
<div class="a" style="left:1154px;top:691.5px;width:618px;height:1px;background:#dadce0;"></div>
<div class="a" style="left:1461.5px;top:551px;width:1px;height:141.5px;background:#dadce0;"></div>
<div class="a" style="left:1771.5px;top:551px;width:1px;height:141.5px;background:#dadce0;"></div>
<div class="t" style="top:582.3px;font-size:24.5px;color:#fff;left:563.5px;transform:scaleX(0.9643);transform-origin:0 0;">Clicks</div>
<svg class="a" style="left:632px;top:590.5px;" width="17" height="9.0" viewBox="0 0 17 9.0"><path d="M0 0H17L8.5 9.0z" fill="#fff"/></svg>
<div class="a" style="left:563.5px;top:611.5px;width:92.5px;height:2px;background:rgba(255,255,255,.85);"></div>
<div class="t" style="top:632.4px;font-size:45px;color:#fff;left:564px;transform:scaleX(0.9184);transform-origin:0 0;">3.05K</div>
<div class="t" style="top:582.3px;font-size:24.5px;color:#fff;left:873px;transform:scaleX(0.9465);transform-origin:0 0;">Impressions</div>
<svg class="a" style="left:1006px;top:590.5px;" width="17" height="9.0" viewBox="0 0 17 9.0"><path d="M0 0H17L8.5 9.0z" fill="#fff"/></svg>
<div class="a" style="left:873px;top:611.5px;width:158px;height:2px;background:rgba(255,255,255,.85);"></div>
<div class="t" style="top:632.4px;font-size:45px;color:#fff;left:873px;transform:scaleX(0.9230);transform-origin:0 0;">227K</div>
<div class="t" style="top:582.3px;font-size:24.5px;color:#3c4043;left:1182.4px;transform:scaleX(0.8710);transform-origin:0 0;">Avg. CPC</div>
<div class="t" style="top:632.4px;font-size:45px;color:#3c4043;left:1183px;transform:scaleX(0.9235);transform-origin:0 0;">$0.65</div>
<div class="t" style="top:582.3px;font-size:24.5px;color:#3c4043;left:1491px;transform:scaleX(0.9330);transform-origin:0 0;">Cost</div>
<div class="t" style="top:632.4px;font-size:45px;color:#3c4043;left:1491px;transform:scaleX(0.9325);transform-origin:0 0;">$1.99K</div>
<div class="a" style="left:1803.3px;top:593.3px;width:7.4px;height:7.4px;border-radius:50%;background:#757575;"></div><div class="a" style="left:1803.3px;top:604.3px;width:7.4px;height:7.4px;border-radius:50%;background:#757575;"></div><div class="a" style="left:1803.3px;top:614.8px;width:7.4px;height:7.4px;border-radius:50%;background:#757575;"></div>
<div class="a" style="left:642px;top:748.95px;width:1058.5px;height:1.5px;background:#e3e3e3;"></div>
<div class="a" style="left:642px;top:905.25px;width:1058.5px;height:1.5px;background:#e3e3e3;"></div>
<div class="a" style="left:642px;top:1061.75px;width:1058.5px;height:1.5px;background:#e3e3e3;"></div>
<div class="t" style="top:739.1px;font-size:22px;color:#70757a;right:1930.0px;transform:scaleX(0.9280);transform-origin:100% 0;">1.9K</div>
<div class="t" style="top:895.4px;font-size:22px;color:#70757a;right:1930.0px;transform:scaleX(1.0080);transform-origin:100% 0;">950</div>
<div class="t" style="top:1051.9px;font-size:22px;color:#70757a;right:1930.0px;transform:scaleX(1.0216);transform-origin:100% 0;">0</div>
<div class="t" style="top:739.1px;font-size:22px;color:#70757a;left:1713px;transform:scaleX(0.9342);transform-origin:0 0;">140K</div>
<div class="t" style="top:895.4px;font-size:22px;color:#70757a;left:1713px;transform:scaleX(0.9069);transform-origin:0 0;">70K</div>
<div class="t" style="top:1051.9px;font-size:22px;color:#70757a;left:1713px;transform:scaleX(1.0216);transform-origin:0 0;">0</div>
<div class="t" style="top:1080.4px;font-size:22px;color:#70757a;left:663.6px;transform:scaleX(0.9687);transform-origin:0 0;">4th quarter 2018</div>
<div class="t" style="top:1080.4px;font-size:22px;color:#70757a;right:882.2px;transform:scaleX(0.9578);transform-origin:100% 0;">3rd quarter 2021</div>
<div class="a" style="left:662.5px;top:1062px;width:1.2px;height:11px;background:#d0d0d0;"></div>
<div class="a" style="left:1679.5px;top:1062px;width:1.2px;height:11px;background:#d0d0d0;"></div>
<svg class="a" style="left:535px;top:700px;" width="1309" height="400" viewBox="0 0 1309 400"><polyline points="128.0,362.5 220.5,362.5 312.9,362.5 405.4,362.5 497.8,362.5 590.2,362.5 682.7,362.5 775.2,64.0 867.6,158.7 960.1,362.5 1052.5,362.5 1145.0,362.5" fill="none" stroke="#1a73e8" stroke-width="3.6" stroke-linejoin="round"/><polyline points="128.0,362.5 220.5,362.5 312.9,362.5 405.4,362.5 497.8,362.5 590.2,362.5 682.7,362.5 775.2,70.0 867.6,148.6 960.1,362.5 1052.5,362.5 1145.0,362.5" fill="none" stroke="#d93025" stroke-width="3.6" stroke-linejoin="round"/></svg>
<div class="a" style="left:1872px;top:551px;width:427px;height:583px;background:#fff;box-shadow:0 1px 2px rgba(60,64,67,.3),0 1px 3px 1px rgba(60,64,67,.15);border-radius:3px;"></div>
<div class="t" style="top:590.3px;font-size:31.5px;color:#202124;left:1901px;transform:scaleX(1.0128);transform-origin:0 0;">Recommendations</div>
<div class="a" style="left:2257.8px;top:593.3px;width:7.4px;height:7.4px;border-radius:50%;background:#757575;"></div><div class="a" style="left:2257.8px;top:604.3px;width:7.4px;height:7.4px;border-radius:50%;background:#757575;"></div><div class="a" style="left:2257.8px;top:615.3px;width:7.4px;height:7.4px;border-radius:50%;background:#757575;"></div>
<div class="a" style="left:1872px;top:649px;width:427px;height:1.5px;background:#dadce0;"></div>
<div class="a" style="left:1900.5px;top:686.5px;width:35px;height:35px;border-radius:50%;background:#fbe3ea;"></div>
<svg class="a" style="left:1906px;top:692px;" width="24" height="24" viewBox="0 0 24 24"><path transform="scale(.92) translate(1 1)" d="M22.700 19l-9.100-9.100c.9-2.300.4-5-1.500-6.900-2-2-5-2.400-7.400-1.300L9 6 6 9 1.600 4.700C.4 7.100.9 10.100 2.900 12.100c1.900 1.900 4.600 2.400 6.900 1.500l9.100 9.100c.4.4 1 .4 1.400 0l2.300-2.300c.5-.4.5-1.100.1-1.400z" fill="#e52592"/></svg>
<div class="t" style="top:679.1px;font-size:23.5px;color:#202124;font-weight:700;left:1950px;transform:scaleX(0.9075);transform-origin:0 0;">1 ad group does not have any</div>
<div class="t" style="top:705.1px;font-size:23.5px;color:#202124;font-weight:700;left:1950px;transform:scaleX(0.9014);transform-origin:0 0;">ads</div>
<div class="t" style="top:760.8px;font-size:23.5px;color:#202124;left:1900px;transform:scaleX(0.9655);transform-origin:0 0;">Get your ads running by adding ads</div>
<div class="t" style="top:786.8px;font-size:23.5px;color:#202124;left:1900px;transform:scaleX(0.9672);transform-origin:0 0;">to each ad group</div>
<div class="t" style="top:1065.3px;font-size:24.5px;color:#1a73e8;font-weight:700;left:1907.7px;transform:scaleX(0.8624);transform-origin:0 0;">VIEW</div>
<div class="a" style="left:535px;top:1163px;width:867.5px;height:320px;background:#fff;box-shadow:0 1px 2px rgba(60,64,67,.3),0 1px 3px 1px rgba(60,64,67,.15);border-radius:3px;"></div>
<div class="t" style="top:1209.0px;font-size:31.5px;color:#202124;left:563.4px;transform:scaleX(1.0023);transform-origin:0 0;">Campaigns</div>
<div class="a" style="left:1362.5px;top:1205.0px;width:7.4px;height:7.4px;border-radius:50%;background:#757575;"></div><div class="a" style="left:1362.5px;top:1216.2px;width:7.4px;height:7.4px;border-radius:50%;background:#757575;"></div><div class="a" style="left:1362.5px;top:1227.3px;width:7.4px;height:7.4px;border-radius:50%;background:#757575;"></div>
<div class="t" style="top:1274.1px;font-size:23.5px;color:#202124;font-weight:700;left:883.3px;transform:scaleX(0.9038);transform-origin:0 0;">Cost</div>
<svg class="a" style="left:1025px;top:1281px;" width="17.59999999999991" height="9" viewBox="0 0 17.59999999999991 9"><path d="M0 0H17.59999999999991L8.799999999999955 9z" fill="#202124"/></svg>
<div class="a" style="left:882px;top:1302.5px;width:168.7px;height:2px;background:#dadce0;"></div>
<div class="t" style="top:1274.1px;font-size:23.5px;color:#757575;left:1071.6px;transform:scaleX(0.9655);transform-origin:0 0;">Clicks</div>
<svg class="a" style="left:1196px;top:1281px;" width="17" height="9" viewBox="0 0 17 9"><path d="M0 0H17L8.5 9z" fill="#757575"/></svg>
<div class="a" style="left:1072px;top:1302.5px;width:149px;height:2px;background:#dadce0;"></div>
<div class="t" style="top:1274.1px;font-size:23.5px;color:#757575;left:1242.5px;transform:scaleX(0.8696);transform-origin:0 0;">CTR</div>
<svg class="a" style="left:1366px;top:1281px;" width="17.5" height="9" viewBox="0 0 17.5 9"><path d="M0 0H17.5L8.75 9z" fill="#757575"/></svg>
<div class="a" style="left:1242.5px;top:1302.5px;width:149px;height:2px;background:#dadce0;"></div>
<div class="a" style="left:535px;top:1318.5px;width:867.5px;height:1.5px;background:#dadce0;"></div>
<div class="a" style="left:871px;top:1320px;width:190px;height:84px;background:#7baaf7;"></div>
<div class="a" style="left:1061px;top:1320px;width:341.5px;height:84px;background:#dddddd;"></div>
<div class="a" style="left:535px;top:1404px;width:867.5px;height:1.5px;background:#dadce0;"></div>
<div class="a" style="left:871px;top:1405.5px;width:190px;height:60px;background:#d2e3fc;"></div>
<div class="a" style="left:1061px;top:1405.5px;width:341.5px;height:60px;background:#f3f3f3;"></div>
<div class="a" style="left:564.5px;top:1350.75px;width:19.5px;height:19.5px;border-radius:50%;background:#188038;"></div>
<div class="a" style="left:564.5px;top:1436.05px;width:19.5px;height:19.5px;border-radius:50%;background:#188038;"></div>
<div class="t" style="top:1349.8px;font-size:24.5px;color:#1967d2;left:600.4px;transform:scaleX(0.9262);transform-origin:0 0;">Trafic vers le site Web</div>
<div class="t" style="top:1435.3px;font-size:24.5px;color:#1967d2;left:600.4px;transform:scaleX(0.9406);transform-origin:0 0;">vidéo youtube</div>
<div class="t" style="top:1350.3px;font-size:24.5px;color:#3c4043;right:1529.0px;transform:scaleX(0.9089);transform-origin:100% 0;">CA$1,991.83</div>
<div class="t" style="top:1350.3px;font-size:24.5px;color:#3c4043;right:1358.7px;transform:scaleX(0.8938);transform-origin:100% 0;">3,049</div>
<div class="t" style="top:1350.3px;font-size:24.5px;color:#3c4043;right:1187.6px;transform:scaleX(0.8723);transform-origin:100% 0;">1.35%</div>
<div class="t" style="top:1435.3px;font-size:24.5px;color:#3c4043;right:1529.0px;transform:scaleX(0.9177);transform-origin:100% 0;">CA$0.00</div>
<div class="t" style="top:1435.3px;font-size:24.5px;color:#3c4043;right:1358.7px;transform:scaleX(0.9908);transform-origin:100% 0;">0</div>
<div class="t" style="top:1435.3px;font-size:24.5px;color:#3c4043;right:1187.6px;transform:scaleX(0.8723);transform-origin:100% 0;">0.00%</div>
<div class="a" style="left:1431px;top:1163px;width:868px;height:320px;background:#fff;box-shadow:0 1px 2px rgba(60,64,67,.3),0 1px 3px 1px rgba(60,64,67,.15);border-radius:3px;"></div>
<div class="t" style="top:1201.6px;font-size:31.5px;color:#202124;left:1459.8px;transform:scaleX(1.0087);transform-origin:0 0;">Measure conversions</div>
<div class="a" style="left:2258.6px;top:1204.9px;width:7.4px;height:7.4px;border-radius:50%;background:#757575;"></div><div class="a" style="left:2258.6px;top:1215.8px;width:7.4px;height:7.4px;border-radius:50%;background:#757575;"></div><div class="a" style="left:2258.6px;top:1226.7px;width:7.4px;height:7.4px;border-radius:50%;background:#757575;"></div>
<div class="a" style="left:1473.8px;top:1304.3px;width:35.4px;height:35.4px;border-radius:50%;background:#1a73e8;"></div>
<div class="t" style="top:1312.5px;font-size:23px;color:#fff;left:1484.5px;">1</div>
<div class="t" style="top:1311.7px;font-size:24px;color:#202124;font-weight:700;left:1522.7px;transform:scaleX(0.9782);transform-origin:0 0;">Select the action that you'd like to track</div>
<div class="a" style="left:1488.5px;top:1355px;width:1.5px;height:110px;background:#dadce0;"></div>
<div class="t" style="top:1395.3px;font-size:24.5px;color:#3c4043;left:1518.4px;transform:scaleX(1.0477);transform-origin:0 0;">A conversion action is something valuable to your business</div>
<div class="t" style="top:1430.8px;font-size:24.5px;color:#3c4043;left:1517.5px;transform:scaleX(1.0545);transform-origin:0 0;">that people do after interacting with your ads.</div>
<div class="a" style="left:0;top:1398px;width:2560px;height:65px;background:linear-gradient(180deg,rgba(0,0,0,0),rgba(60,64,67,.085));z-index:8;border-radius:0 0 15px 15px;"></div>
</div>
<div class="a" style="left:87px;top:1468px;width:2384px;height:122px;border-radius:24px;background:linear-gradient(90deg,#6c4424 0%,#684a32 22%,#634b3a 50%,#5e4436 72%,#4e2c24 100%);box-shadow:inset 0 0 0 1.5px rgba(255,255,255,.18);"></div>
<svg class="a" style="left:105.6px;top:1486px;" width="77" height="77" viewBox="0 0 77 77"><defs><clipPath id="fc"><rect width="77" height="77" rx="17"/></clipPath></defs><g clip-path="url(#fc)"><defs><linearGradient id="fdg" x1="0" y1="0" x2="0" y2="1"><stop offset="0" stop-color="#1cbcf6"/><stop offset="1" stop-color="#1a66e6"/></linearGradient></defs><rect width="77" height="77" fill="url(#fdg)"/><path d="M40 0H77V77H37C30 60 34 45 40 40 36 30 38 15 40 0z" fill="#e8ecf2"/></g><path d="M14 55c14 10 34 10 48 0" stroke="#1a1a2a" stroke-width="3" fill="none"/><rect x="19" y="22" width="3" height="9" fill="#1a1a2a"/><rect x="55" y="22" width="3" height="9" fill="#1a1a2a"/></svg>
<svg class="a" style="left:209.1px;top:1486px;" width="77" height="77" viewBox="0 0 77 77"><rect x="0" y="0" width="77" height="77" rx="17" fill="#d8ccc4"/><rect x="13" y="13" width="14" height="14" rx="3" fill="#3cc84a"/><rect x="32" y="13" width="14" height="14" rx="3" fill="#f8c81c"/><rect x="51" y="13" width="14" height="14" rx="3" fill="#f59a1a"/><rect x="13" y="32" width="14" height="14" rx="3" fill="#e8221e"/><rect x="32" y="32" width="14" height="14" rx="3" fill="#a8a8b0"/><rect x="51" y="32" width="14" height="14" rx="3" fill="#f0406a"/><rect x="13" y="51" width="14" height="14" rx="3" fill="#9a48e0"/><rect x="32" y="51" width="14" height="14" rx="3" fill="#2a9af0"/><rect x="51" y="51" width="14" height="14" rx="3" fill="#20c0a0"/></svg>
<svg class="a" style="left:312.6px;top:1486px;" width="77" height="77" viewBox="0 0 77 77"><rect x="0" y="0" width="77" height="77" rx="17" fill="#f4f4f6"/><circle cx="38.5" cy="38.5" r="31" fill="#1e88f0"/><circle cx="38.5" cy="38.5" r="27" fill="none" stroke="#fff" stroke-width="1" stroke-dasharray="1 3"/><path d="M60 17L34 35 43 42z" fill="#f03a2a"/><path d="M17 60L34 35 43 42z" fill="#fff"/></svg>
<svg class="a" style="left:416.1px;top:1486px;" width="77" height="77" viewBox="0 0 77 77"><rect x="0" y="0" width="77" height="77" rx="17" fill="#f4f4f6"/><circle cx="38.5" cy="38.5" r="30" fill="#db4437"/><path d="M38.500 38.500L12.500 23.500A30 30 0 0 0 38.500 68.500z" fill="#0f9d58"/><path d="M38.500 38.500L38.500 68.500A30 30 0 0 0 64.500 23.500z" fill="#ffcd40"/><circle cx="38.5" cy="38.5" r="13" fill="#fff"/><circle cx="38.5" cy="38.5" r="10.5" fill="#4285f4"/></svg>
<svg class="a" style="left:519.6px;top:1486px;" width="77" height="77" viewBox="0 0 77 77"><defs><linearGradient id="mg" x1="0" y1="0" x2="0" y2="1"><stop offset="0" stop-color="#1a7af0"/><stop offset="1" stop-color="#2ac0f8"/></linearGradient></defs><rect x="0" y="0" width="77" height="77" rx="17" fill="url(#mg)"/><rect x="12" y="24" width="53" height="34" rx="2" fill="#f0f0f0"/><path d="M12 25l26.500 20L65 25" stroke="#c8c8c8" stroke-width="2" fill="none"/></svg>
<div class="a" style="left:553px;top:1477.5px;width:59px;height:34.5px;border-radius:17px;background:#e8312a;"></div>
<div class="t" style="top:1485.6px;font-size:20px;color:#fff;left:559.5px;transform:scaleX(0.9191);transform-origin:0 0;">2,474</div>
<svg class="a" style="left:623.1px;top:1486px;" width="77" height="77" viewBox="0 0 77 77"><rect x="0" y="0" width="77" height="77" rx="17" fill="#2ecc40"/><ellipse cx="38.500" cy="36" rx="26" ry="20" fill="#f4fff4"/><path d="M22 50l-4 10 12-6z" fill="#f4fff4"/></svg>
<svg class="a" style="left:726.6px;top:1486px;" width="77" height="77" viewBox="0 0 77 77"><rect x="0" y="0" width="77" height="77" rx="17" fill="#b48a52"/><rect x="70" y="18" width="7" height="45" fill="#3a8ae0"/><circle cx="38.500" cy="38.500" r="22" fill="none" stroke="#8a6238" stroke-width="2.500"/><circle cx="38.500" cy="32" r="7" fill="none" stroke="#8a6238" stroke-width="2.500"/><path d="M24 54c4-10 25-10 29 0" stroke="#8a6238" stroke-width="2.500" fill="none"/></svg>
<svg class="a" style="left:830.1px;top:1486px;" width="77" height="77" viewBox="0 0 77 77"><rect x="0" y="0" width="77" height="77" rx="17" fill="#fbfbfb"/><path d="M0 17A17 17 0 0 1 17 0H60A17 17 0 0 1 77 17V22H0z" fill="#f23c32"/><text x="38.500" y="18" text-anchor="middle" font-family="Liberation Sans" font-size="13" font-weight="700" fill="#fff">AUG</text><text x="38.500" y="63" text-anchor="middle" font-family="Liberation Sans" font-size="38" fill="#2a2a2a">25</text></svg>
<svg class="a" style="left:933.6px;top:1486px;" width="77" height="77" viewBox="0 0 77 77"><rect x="0" y="0" width="77" height="77" rx="17" fill="#fafaf2"/><path d="M0 17A17 17 0 0 1 17 0H60A17 17 0 0 1 77 17V20H0z" fill="#f8cc2a"/><path d="M8 36H69M8 50H69M8 64H69" stroke="#dcdcd0" stroke-width="1.200"/></svg>
<svg class="a" style="left:1037.1px;top:1486px;" width="77" height="77" viewBox="0 0 77 77"><rect x="0" y="0" width="77" height="77" rx="17" fill="#f5334e"/><path d="M30 52V22l24-6v30" stroke="#fff" stroke-width="5" fill="none"/><circle cx="24" cy="53" r="7" fill="#fff"/><circle cx="48" cy="47" r="7" fill="#fff"/></svg>
<svg class="a" style="left:1140.6px;top:1486px;" width="77" height="77" viewBox="0 0 77 77"><rect x="0" y="0" width="77" height="77" rx="17" fill="#9a48d8"/><circle cx="38.500" cy="33" r="24" fill="none" stroke="#fff" stroke-width="3"/><circle cx="38.500" cy="33" r="15" fill="none" stroke="#9a48d8" stroke-width="0"/><path d="M27 46a15 15 0 1 1 23 0" stroke="#fff" stroke-width="3" fill="none"/><circle cx="38.500" cy="30" r="6" fill="#fff"/><rect x="33" y="40" width="11" height="27" rx="5.500" fill="#fff"/></svg>
<svg class="a" style="left:1244.1px;top:1486px;" width="77" height="77" viewBox="0 0 77 77"><rect x="0" y="0" width="77" height="77" rx="17" fill="#1a1c1e"/><path d="M27.500 27.500c1.400-1.700 1.200-3.600 1.200-3.600s-1.900.1-3.300 1.700c-1.300 1.500-1.100 3.500-1.100 3.500s1.800.1 3.200-1.600zM30.500 38.500c0-3.300 2.700-4.800 2.700-4.800-1.500-2.200-3.800-2.400-4.600-2.400-1.900-.2-3.600 1.100-4.600 1.100s-2.400-1.100-4-1-3 1-3.900 2.400c-1.700 2.900-.4 7.200 1.200 9.500.8 1.100 1.700 2.400 3 2.400 1.200 0 1.600-.8 3.100-.8s1.800.8 3.100.8 2.100-1.200 2.900-2.300c.9-1.300 1.300-2.600 1.300-2.700 0 0-2.300-.9-2.400-3.900z" fill="#fff"/><text x="35" y="48" font-family="Liberation Sans" font-size="25" fill="#fff">tv</text></svg>
<svg class="a" style="left:1347.6px;top:1486px;" width="77" height="77" viewBox="0 0 77 77"><rect x="0" y="0" width="77" height="77" rx="17" fill="#fbfbfb"/><rect x="17" y="40" width="9" height="24" fill="#e8323a"/><rect x="29" y="30" width="9" height="34" fill="#f5a21a"/><rect x="41" y="18" width="9" height="46" fill="#34c84a"/><rect x="53" y="25" width="9" height="39" fill="#2a8af0"/></svg>
<svg class="a" style="left:1451.1px;top:1486px;" width="77" height="77" viewBox="0 0 77 77"><rect x="0" y="0" width="77" height="77" rx="17" fill="#1c8ef2"/><path d="M27 58L42 20M50 58L35 20M18 48H59" stroke="#fff" stroke-width="5" stroke-linecap="round"/></svg>
<svg class="a" style="left:1554.6px;top:1486px;" width="77" height="77" viewBox="0 0 77 77"><rect x="0" y="0" width="77" height="77" rx="17" fill="#fbf8f2"/><path d="M58 10L66 16 30 66 22 70 24 60z" fill="#f5a623"/><path d="M22 70L24 60 30 66z" fill="#333"/><text x="12" y="36" font-family="Liberation Serif" font-size="30" fill="#f5a623">“</text></svg>
<svg class="a" style="left:1658.1px;top:1486px;" width="77" height="77" viewBox="0 0 77 77"><rect x="0" y="0" width="77" height="77" rx="17" fill="#8e8e93"/><circle cx="38.500" cy="38.500" r="30" fill="#5a5a5e"/><circle cx="38.500" cy="38.500" r="26" fill="none" stroke="#9a9aa0" stroke-width="5" stroke-dasharray="2 2"/><circle cx="38.500" cy="38.500" r="18" fill="#b8b8bc"/><circle cx="38.500" cy="38.500" r="8" fill="#5a5a5e"/><path d="M38.500 20v10M22 47l8-5M55 47l-8-5" stroke="#5a5a5e" stroke-width="4"/></svg>
<div class="a" style="left:1774.5px;top:1492px;width:1.5px;height:70px;background:rgba(255,255,255,.35);"></div>
<svg class="a" style="left:1812px;top:1486px;" width="77" height="77" viewBox="0 0 77 77"><rect x="0" y="0" width="77" height="77" rx="17" fill="#0e8ee9"/><circle cx="38.500" cy="38.500" r="27" fill="#fff"/><path d="M14 38.500l12-10v6h25v-6l12 10-12 10v-6H26v6z" fill="#0e8ee9"/></svg>
<svg class="a" style="left:1915.5px;top:1486px;" width="77" height="77" viewBox="0 0 77 77"><circle cx="38.500" cy="38.500" r="36" fill="#1e9fe0"/><text x="38.500" y="56" text-anchor="middle" font-family="Liberation Sans" font-weight="700" font-size="48" fill="#fff">S</text></svg>
<div class="a" style="left:1969px;top:1478px;width:34px;height:34px;border-radius:50%;background:#e8312a;"></div>
<div class="t" style="top:1486.1px;font-size:20px;color:#fff;left:1980px;">4</div>
<svg class="a" style="left:2014px;top:1482px;" width="85" height="85" viewBox="0 0 85 85"><rect x="0" y="0" width="85" height="85" rx="24" fill="#2d8cff"/><rect x="17" y="28" width="36" height="29" rx="6" fill="#fff"/><path d="M56 38l14-9v27l-14-9z" fill="#fff"/></svg>
<svg class="a" style="left:2122.5px;top:1486px;" width="77" height="77" viewBox="0 0 77 77"><rect x="0" y="0" width="77" height="77" rx="17" fill="#d8441e"/><circle cx="38.500" cy="38.500" r="28.500" fill="#f4f2f0"/><path d="M23 36l10 9-9 10M54 21l-10 9 9 10" stroke="#d8441e" stroke-width="6" fill="none" stroke-linejoin="miter"/></svg>
<svg class="a" style="left:2226px;top:1486px;" width="77" height="77" viewBox="0 0 77 77"><rect x="0" y="0" width="77" height="77" rx="17" fill="#f23a30"/><path d="M16 38.500L31 23.500 46 38.500 31 53.500z" fill="#fff"/><path d="M44 21L61 38.500 44 56" stroke="#fff" stroke-width="6.500" fill="none"/></svg>
<div class="a" style="left:2339.5px;top:1492px;width:1.5px;height:70px;background:rgba(255,255,255,.35);"></div>
<svg class="a" style="left:2379px;top:1479px;" width="69" height="80" viewBox="0 0 69 80"><defs><linearGradient id="tg" x1="0" y1="0" x2="1" y2="0"><stop offset="0" stop-color="#6e7074"/><stop offset=".5" stop-color="#a8aaae"/><stop offset="1" stop-color="#6e7074"/></linearGradient></defs><path d="M2 12H67L60 78H9z" fill="url(#tg)"/><path d="M8 14l10-10 12 6 8-8 12 8 12 4z" fill="#e8e8ec"/></svg>
<div class="a" style="left:140.6px;top:1580.5px;width:6px;height:6px;border-radius:50%;background:rgba(230,210,200,.85);"></div>
<div class="a" style="left:451.6px;top:1580.5px;width:6px;height:6px;border-radius:50%;background:rgba(230,210,200,.85);"></div>
<div class="a" style="left:555.6px;top:1580.5px;width:6px;height:6px;border-radius:50%;background:rgba(230,210,200,.85);"></div>
<div class="a" style="left:969.6px;top:1580.5px;width:6px;height:6px;border-radius:50%;background:rgba(230,210,200,.85);"></div>
<div class="a" style="left:1072.6px;top:1580.5px;width:6px;height:6px;border-radius:50%;background:rgba(230,210,200,.85);"></div>
<div class="a" style="left:1847.5px;top:1580.5px;width:6px;height:6px;border-radius:50%;background:rgba(230,210,200,.85);"></div>
<div class="a" style="left:1951px;top:1580.5px;width:6px;height:6px;border-radius:50%;background:rgba(230,210,200,.85);"></div>
<div class="a" style="left:2053.5px;top:1580.5px;width:6px;height:6px;border-radius:50%;background:rgba(230,210,200,.85);"></div>
<div class="a" style="left:2158px;top:1580.5px;width:6px;height:6px;border-radius:50%;background:rgba(230,210,200,.85);"></div>
<div class="a" style="left:2261.5px;top:1580.5px;width:6px;height:6px;border-radius:50%;background:rgba(230,210,200,.85);"></div>
</body></html>
